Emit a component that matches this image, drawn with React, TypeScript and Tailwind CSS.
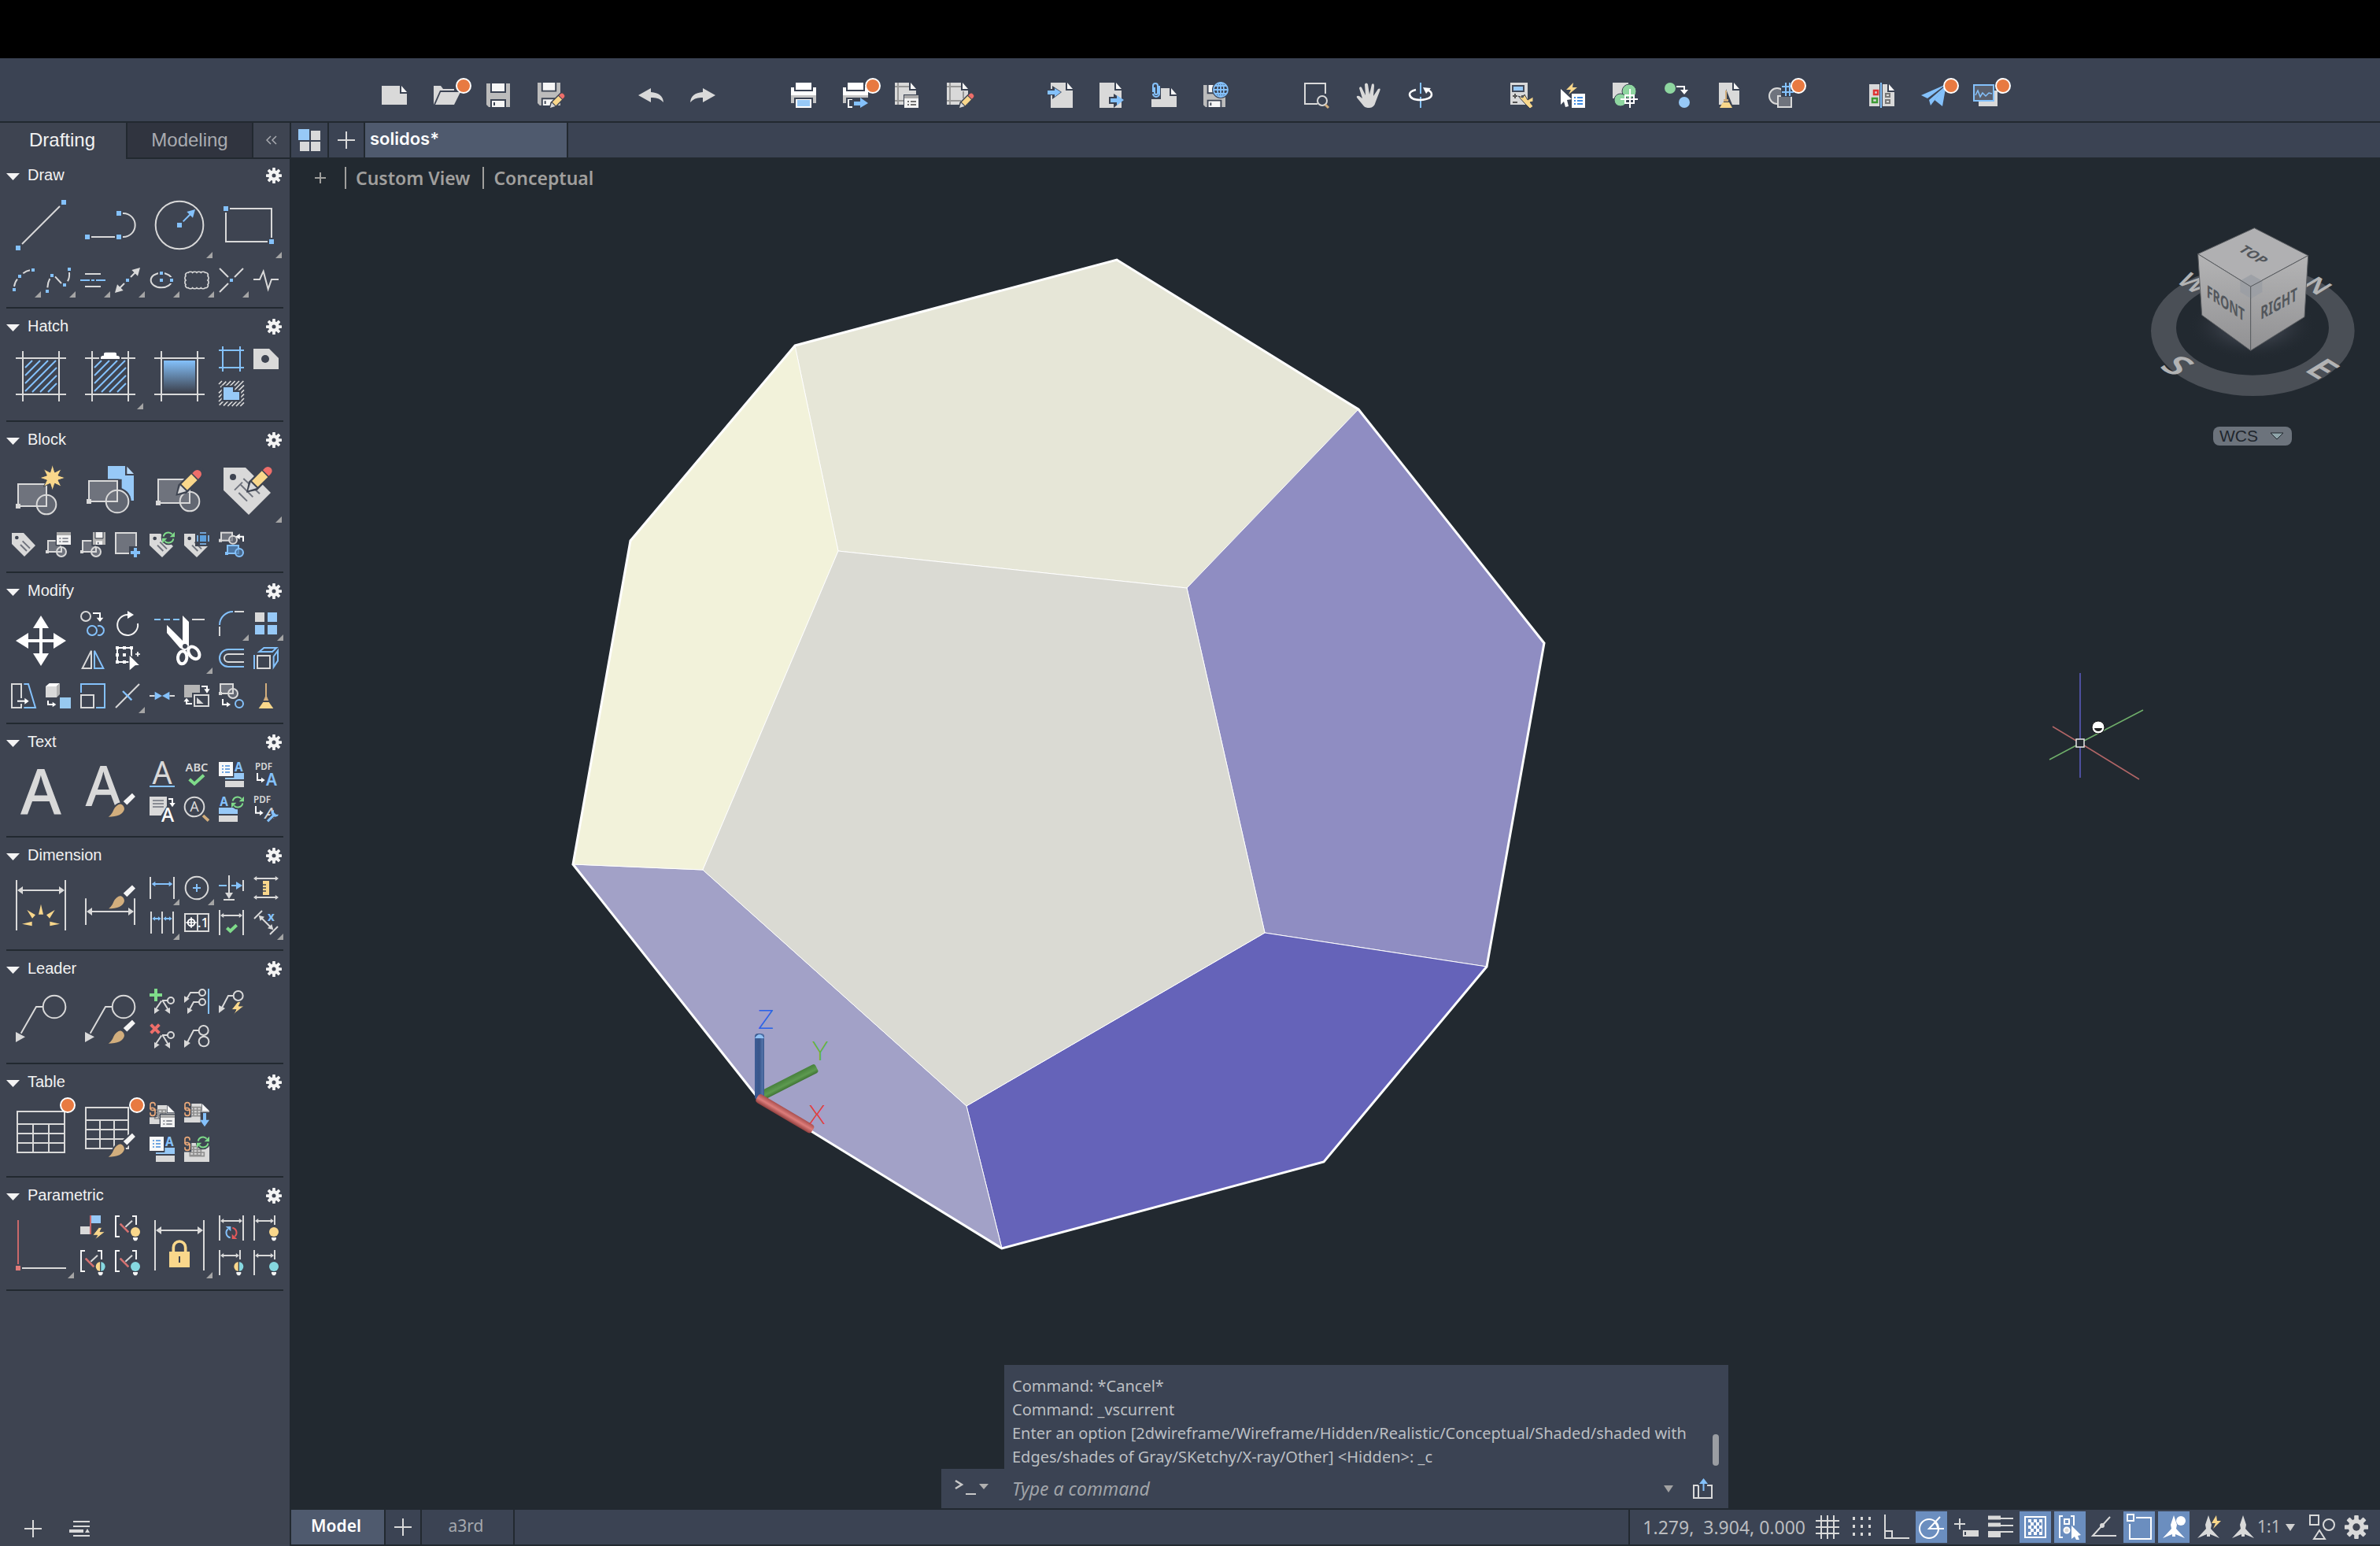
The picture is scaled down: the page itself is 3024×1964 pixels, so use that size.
import type { ReactNode } from 'react';

const W = '#d9d9d9';
const B = '#84c1fb';
const BF = '#97c9f7';
const Y = '#f9d78b';
const G = '#7fdb8a';
const R = '#ee6e6a';
const GR = '#6f737d';
const BG = '#3e4451';
const TAN = '#d2ae7d';
const SANS = 'Noto Sans, sans-serif';

/* ---------- shared drawing pieces ---------- */

function Sq({ x, y, s = 18, c = B }: { x: number; y: number; s?: number; c?: string }) {
  return <rect x={x - s / 2} y={y - s / 2} width={s} height={s} fill={c} stroke="none" />;
}

function Fill({ d, c = W }: { d: string; c?: string }) {
  return <path d={d} fill={c} stroke="none" />;
}

function Glyph({ x, y, s, c = W, w = 500, children }: { x: number; y: number; s: number; c?: string; w?: number; children: string }) {
  return (
    <text x={x} y={y} fontSize={s} fill={c} stroke="none" fontWeight={w} fontFamily={SANS} textAnchor="middle">
      {children}
    </text>
  );
}

function Span({ x1, x2, y, c = W, h = 10 }: { x1: number; x2: number; y: number; c?: string; h?: number }) {
  return (
    <>
      <path d={`M${x1 + h} ${y} H${x2 - h}`} stroke={c} />
      <Fill c={c} d={`M${x1} ${y} l${h * 1.4} ${-h} v${h * 2}z M${x2} ${y} l${-h * 1.4} ${-h} v${h * 2}z`} />
    </>
  );
}

function Pencil({ x, y, k = 1 }: { x: number; y: number; k?: number }) {
  return (
    <g transform={`translate(${x} ${y}) rotate(-45) scale(${k})`} stroke="none">
      <path d="M-10 0 L26 -23 H112 a23 23 0 0 1 0 46 H26z" fill={BG} />
      <path d="M0 0 L30 -16 V16z" fill={W} />
      <rect x="36" y="-16" width="54" height="32" fill={Y} />
      <path d="M95 -16 h11 a16 16 0 0 1 0 32 h-11z" fill={R} />
    </g>
  );
}

function Brush({ dy = 0 }: { dy?: number }) {
  return (
    <g transform={`translate(0 ${dy})`} stroke={BG} strokeWidth="6">
      <path d="M80 194 Q100 182 106 164 Q116 142 136 139 Q152 144 153 162 Q146 196 80 194z" fill={TAN} />
      <path d="M142 132 L180 97 L196 114 L160 150z" fill="#f4f4f4" />
    </g>
  );
}

function Sync({ x, y, a = G, b = G }: { x: number; y: number; a?: string; b?: string }) {
  return (
    <g transform={`translate(${x} ${y})`}>
      <circle r="28" fill={BG} stroke="none" />
      <path d="M-19 -4 A19 19 0 0 1 14 -13" stroke={a} />
      <path d="M19 4 A19 19 0 0 1 -14 13" stroke={b} />
      <Fill c={a} d="M24 -22 V-2 H5z" />
      <Fill c={b} d="M-24 22 V2 H-5z" />
    </g>
  );
}

function Bulb({ x, y, l, r = l }: { x: number; y: number; l: string; r?: string }) {
  return (
    <g transform={`translate(${x} ${y})`} stroke="none">
      <circle r="23" fill={BG} />
      <path d="M0 -18 a18 18 0 0 0 0 36z" fill={l} />
      <path d="M0 -18 a18 18 0 0 1 0 36z" fill={r} />
      {l !== r && <path d="M-2 -18 h4 v36 h-4z" fill={BG} />}
      <path d="M-9 21 h18 v6 l-5 7 h-8 l-5 -7z" fill="#f4f4f4" />
    </g>
  );
}

function Tag() {
  return (
    <>
      <Fill d="M0 6 H42 L90 54 L48 96 L0 50z" />
      <circle cx="20" cy="24" r="7" fill={BG} stroke="none" />
      <path d="M40 38 L66 64 M30 50 L52 72" stroke={GR} />
    </>
  );
}

function MiniBlock({ c = W, f = GR, x = 0, y = 0 }: { c?: string; f?: string; x?: number; y?: number }) {
  return (
    <g transform={`translate(${x} ${y})`} stroke={c}>
      <rect x="9" y="3" width="42" height="30" fill={f} />
      <circle cx="54" cy="30" r="15" fill={f} fillOpacity=".7" />
      <Sq x={6} y={33} s={12} c={c} />
    </g>
  );
}

const BOLT = 'M24 0 L0 30 H18 L8 48 L48 16 H28 L36 0z';

function Leader({ x, y, k = 1 }: { x: number; y: number; k?: number }) {
  return (
    <g transform={`translate(${x} ${y}) scale(${k})`}>
      <path d="M55 20 H36 L12 66" />
      <circle cx="74" cy="20" r="18" />
      <Fill d="M0 56 L24 68 L0 86z" />
    </g>
  );
}

function Split() {
  return (
    <>
      <path d="M69 45 H48 M46 46 L24 78 M50 46 L70 78" />
      <circle cx="81" cy="45" r="12" />
      <Fill d="M18 96 V72 L38 82z M78 96 V72 L58 82z" />
    </>
  );
}

function Frame() {
  return <path d="M27 0 V192 M165 0 V192 M0 27 H192 M0 165 H192" />;
}

const hatchLines = [99, 129, 159, 189, 219, 249, 279].map((c) => {
  const x1 = Math.max(36, c - 156);
  const x2 = Math.min(156, c - 36);
  return `M${x1} ${c - x1} L${x2} ${c - x2}`;
}).join(' ');

function Chain() {
  return (
    <g stroke="#e9a879" strokeWidth="5">
      <rect x="-2" y="-2" width="28" height="60" fill={BG} stroke="none" />
      <path d="M21 14 V10 a9 8 0 0 0 -18 0 V20 a9 8 0 0 0 18 6 M3 40 V44 a9 8 0 0 0 18 0 V34 a9 8 0 0 0 -18 -6" />
    </g>
  );
}

function Cells({ x, y }: { x: number; y: number }) {
  return <path transform={`translate(${x} ${y})`} d="M0 0 H42 V33 H0z M0 11 H42 M0 22 H42 M14 0 V33 M28 0 V33" stroke="#8f8f8f" strokeWidth="5" />;
}

function Bracket() {
  return (
    <>
      <path d="M18 3 H3 V81 H18 M66 3 H81 V36" stroke="#f4f4f4" />
      <path d="M40 44 L66 20" />
      <path d="M20 32 L52 64" stroke="#d57170" strokeWidth="8" />
    </>
  );
}

/* ---------- palette icons, 192 units for 64px ---------- */

const large: Record<string, ReactNode> = {
  line: <><path d="M24 168 L168 24" /><Sq x={9} y={183} /><Sq x={183} y={9} /></>,
  polyline: <><path d="M24 141 H114 M144 51 h2 a45 45 0 0 1 0 90 h-2" /><Sq x={9} y={141} /><Sq x={129} y={141} /><Sq x={129} y={51} /></>,
  circle: (
    <>
      <circle cx="96" cy="96" r="91" />
      <path d="M110 82 L138 54" stroke={B} />
      <Fill c={B} d="M156 36 L124 45 L147 68z" />
      <Sq x={96} y={96} />
    </>
  ),
  rectangle: <><path d="M24 33 H183 V144 M9 48 V159 H168" /><Sq x={9} y={33} /><Sq x={183} y={159} /></>,
  hatch: <><Frame /><path d={hatchLines} stroke={B} /></>,
  'hatch edit': (
    <>
      <Frame />
      <path d={hatchLines} stroke={B} />
      <Fill c={BG} d="M54 0 H138 V34 H54z" />
      <Fill c="#fff" d="M60 30 V24 Q60 18 72 17 V10 Q72 5 78 5 H114 Q120 5 120 10 V17 Q132 18 132 24 V30z" />
    </>
  ),
  gradient: (
    <>
      <defs>
        <linearGradient id="gradFill" x1="0" x2="0" y1="0" y2="1">
          <stop offset="0" stopColor={B} />
          <stop offset="1" stopColor={BG} />
        </linearGradient>
      </defs>
      <Frame />
      <rect x="36" y="36" width="120" height="120" fill="url(#gradFill)" stroke="none" />
    </>
  ),
  'create block': (
    <>
      <rect x="9" y="75" width="108" height="84" fill={GR} />
      <circle cx="117" cy="153" r="37" fill={GR} fillOpacity=".75" />
      <path d="M117 116 V159 H80" />
      <Sq x={9} y={159} c={W} />
      <path d="M140 0 L149 30 L174 17 L162 42 L190 51 L162 60 L174 85 L149 73 L140 100 L131 73 L106 85 L118 60 L90 51 L118 42 L106 17 L131 30z" fill={Y} stroke={BG} strokeWidth="3" />
    </>
  ),
  'insert block': (
    <>
      <Fill c={BF} d="M87 6 H153 V42 H186 V138 H140 V56 H87z" />
      <Fill c="#b9daf8" d="M160 8 L186 36 H160z" />
      <circle cx="123" cy="141" r="53" fill={BG} stroke="none" />
      <rect x="8" y="56" width="122" height="90" fill={BG} stroke="none" />
      <rect x="15" y="63" width="108" height="78" fill={GR} />
      <circle cx="123" cy="141" r="43" fill={GR} fillOpacity=".75" />
      <path d="M123 98 V141 H80" />
      <Sq x={15} y={141} c={W} />
    </>
  ),
  'edit block': (
    <>
      <rect x="15" y="57" width="120" height="90" fill={GR} />
      <circle cx="135" cy="141" r="37" fill={GR} fillOpacity=".75" />
      <path d="M135 104 V147 H98" />
      <Sq x={15} y={147} c={W} />
      <Pencil x={89} y={112} />
    </>
  ),
  'edit attribute': (
    <>
      <Fill d="M0 12 H84 L180 108 L96 192 L0 98z" />
      <circle cx="36" cy="48" r="12" fill={BG} stroke="none" />
      <path d="M76 54 L138 112 M42 98 L72 68 M66 78 L112 124 M58 108 L90 140" stroke={GR} />
      <Pencil x={94} y={100} />
    </>
  ),
  move: <Fill c="#fff" d="M96 0 L126 48 H102 V90 H144 V66 L192 96 L144 126 V102 H102 V144 H126 L96 192 L66 144 H90 V102 H48 V126 L0 96 L48 66 V90 H90 V48 H66z" />,
  trim: (
    <>
      <path d="M0 15 H24 M36 15 H60 M72 15 H96" stroke={B} />
      <path d="M144 15 H192" />
      <Fill c="#fff" d="M48 36 L106 94 L132 122 L118 134 L98 124 L48 66z M108 0 L132 24 V118 L108 106z" />
      <ellipse cx="107" cy="160" rx="17" ry="24" stroke="#fff" strokeWidth="12" transform="rotate(6 107 160)" />
      <ellipse cx="151" cy="142" rx="18" ry="26" stroke="#fff" strokeWidth="12" transform="rotate(-38 151 142)" />
      <circle cx="117" cy="117" r="9" fill={BG} stroke="none" />
    </>
  ),
  text: <Glyph x={96} y={180} s={238} w={500}>A</Glyph>,
  'text style': <><Glyph x={70} y={150} s={210} w={500}>A</Glyph><Brush /></>,
  dimension: (
    <>
      <path d="M3 0 V192 M189 0 V192" />
      <Span x1={6} x2={186} y={39} h={15} />
      <Fill c={Y} d="M96 92 L105 131 H87z M43 114 L75 133 L63 146z M149 114 L129 146 L117 133z M24 167 L62 158 V175z M168 167 L130 158 V175z" />
    </>
  ),
  'dimension style': (
    <>
      <path d="M3 70 V171 M189 70 V171" />
      <Span x1={6} x2={186} y={120} h={15} />
      <Brush dy={-82} />
    </>
  ),
  multileader: <><path d="M105 51 H78 L20 152" /><circle cx="147" cy="51" r="43" /><Fill d="M0 147 L36 166 L0 186z" /></>,
  'multileader style': <><path d="M105 51 H78 L20 152" /><circle cx="147" cy="51" r="43" /><Fill d="M0 147 L36 166 L0 186z" /><Brush /></>,
  table: <path d="M6 18 H186 V174 H6z M6 66 H186 M6 102 H186 M6 138 H186 M66 66 V174 M126 66 V174" />,
  'table style': <><path d="M3 3 H165 V159 H3z M3 51 H165 M3 87 H165 M3 123 H165 M57 51 V159 M111 51 V159" /><Brush /></>,
  constraint: <><path d="M9 0 V168" stroke="#c9686a" /><path d="M24 183 H192" /><Sq x={9} y={183} c="#e07b79" /></>,
  'dimensional constraint': (
    <>
      <path d="M3 0 V192 M189 0 V192" />
      <Span x1={6} x2={186} y={39} h={15} />
      <path d="M73 122 V104 a23 23 0 0 1 46 0 V122" stroke={Y} strokeWidth="11" />
      <rect x="57" y="120" width="78" height="60" fill={Y} stroke="none" />
      <path d="M96 138 V162" stroke={BG} />
    </>
  ),
};

/* ---------- palette icons, 96 units for 32px ---------- */

const small: Record<string, ReactNode> = {
  arc: <><path d="M12 72 Q15 54 24 44 M46 22 Q58 12 72 10" /><Sq x={12} y={84} s={12} /><Sq x={33} y={33} s={12} /><Sq x={84} y={9} s={12} /></>,
  spline: (
    <>
      <path d="M7 76 Q8 56 16 42 M36 34 L60 60 M84 52 Q92 38 90 18" />
      <Sq x={24} y={30} s={12} /><Sq x={6} y={90} s={12} /><Sq x={72} y={66} s={12} /><Sq x={90} y={6} s={12} />
    </>
  ),
  'multi line': <><path d="M18 24 H78 M18 72 H78" /><path d="M0 48 H36 M42 48 H54 M60 48 H96" stroke={B} /></>,
  'construction line': <><path d="M60 36 L78 18 M36 60 L18 78" /><Fill d="M96 0 L64 9 L87 32z M0 96 L32 87 L9 64z" /><Sq x={48} y={48} s={12} /></>,
  ellipse: (
    <>
      <ellipse cx="45" cy="48" rx="40" ry="28" />
      <Sq x={45} y={21} s={24} c={BG} /><Sq x={84} y={48} s={24} c={BG} />
      <Sq x={45} y={21} s={12} /><Sq x={45} y={48} s={12} /><Sq x={84} y={48} s={12} />
    </>
  ),
  'revision cloud': <path strokeWidth="5" d="M16 19 a9 6 0 0 1 16 0 a9 6 0 0 1 16 0 a9 6 0 0 1 16 0 a9 6 0 0 1 16 0 a9 9 0 0 1 10 13 a6 9 0 0 1 0 16 a6 9 0 0 1 0 16 a9 9 0 0 1 -10 13 a9 6 0 0 1 -16 0 a9 6 0 0 1 -16 0 a9 6 0 0 1 -16 0 a9 6 0 0 1 -16 0 a9 9 0 0 1 -10 -13 a6 9 0 0 1 0 -16 a6 9 0 0 1 0 -16 a9 9 0 0 1 10 -13z" />,
  point: <><path d="M3 3 L36 36 M93 3 L60 36 M3 93 L36 60" /><Sq x={48} y={48} s={12} /></>,
  breakline: <path d="M0 45 H24 L38 14 L56 82 L69 45 H96" />,
  boundary: <path d="M15 0 V96 M81 0 V96 M0 15 H96 M0 81 H96" stroke={B} />,
  region: <><Fill d="M0 9 H60 L96 45 V87 H0z" /><circle cx="45" cy="48" r="15" fill={BG} stroke="none" /></>,
  wipeout: (
    <>
      <path
        strokeWidth="5"
        d="M0 12 L12 0 M6 24 L28 2 M0 46 L46 0 M0 62 L62 0 M0 78 L78 0 M2 92 L94 0 M18 94 L96 16 M34 96 L96 34 M50 96 L96 50 M66 96 L96 66 M82 96 L96 82"
      />
      <path d="M18 24 H54 V42 H78 V72 H18z" fill={BF} stroke={BG} strokeWidth="14" />
      <Fill c={BF} d="M18 24 H54 V42 H78 V72 H18z" />
    </>
  ),
  attribute: (
    <>
      <Fill d="M3 3 H48 L93 51 L51 93 L3 45z" />
      <circle cx="22" cy="21" r="7" fill={BG} stroke="none" />
      <path d="M44 34 L72 62 M36 48 L60 72" stroke={GR} />
    </>
  ),
  'block properties': (
    <>
      <rect x="9" y="33" width="48" height="42" fill={GR} />
      <circle cx="60" cy="75" r="18" fill={GR} />
      <path d="M60 57 V75 H42" />
      <Sq x={6} y={75} s={12} c={W} />
      <Fill c={BG} d="M38 0 H96 V52 H38z" />
      <Fill c="#a9a9a9" d="M42 0 H96 V12 H42z" />
      <Fill c="#f2f2f2" d="M42 12 H96 V48 H42z" />
      <path d="M52 24 H58 M64 24 H86 M52 36 H58 M64 36 H86" stroke={GR} strokeWidth="4" />
    </>
  ),
  'write block': (
    <>
      <rect x="9" y="33" width="48" height="42" fill={GR} />
      <circle cx="60" cy="75" r="18" fill={GR} />
      <path d="M60 57 V75 H42" />
      <Sq x={6} y={75} s={12} c={W} />
      <Fill c={BG} d="M43 0 H96 V53 H43z" />
      <Fill c="#b3b3b3" d="M48 0 H96 V48 H48z" />
      <Fill c="#f2f2f2" d="M58 0 H86 V21 H58z M60 34 H84 V48 H60z" />
      <path d="M57 0 V24 H87 V0" stroke={BG} strokeWidth="3" />
      <path d="M68 38 V46" stroke={BG} strokeWidth="4" />
    </>
  ),
  'add boundary': <><rect x="3" y="3" width="78" height="78" fill={GR} /><Fill c={BG} d="M54 54 H96 V96 H54z" /><path d="M3 3 H81 V54 M3 3 V81 H54" /><path d="M78 60 V96 M60 78 H96" stroke={B} strokeWidth="12" /></>,
  'sync attribute': <><Tag /><Sync x={72} y={21} /></>,
  'attribute extract': (
    <>
      <Tag />
      <Fill c={BG} d="M42 0 H96 V54 H42z" />
      <Fill c="#5c9fdc" d="M60 12 H84 V36 H60z" />
      <path d="M60 3 H84 M60 45 H84 M51 12 V36 M93 12 V36" stroke={B} strokeWidth="5" />
    </>
  ),
  'replace block': (
    <>
      <MiniBlock x={0} y={-1} />
      <path d="M93 36 V17 H78" stroke="#fff" /><Fill c="#fff" d="M64 17 L80 6 V28z" />
      <MiniBlock x={24} y={48} c={B} f="#4d77a4" />
    </>
  ),
  copy: (
    <>
      <circle cx="21" cy="21" r="18" />
      <path d="M48 9 H75 V28" stroke="#fff" /><Fill c="#fff" d="M75 42 L62 26 H88z" />
      <circle cx="45" cy="75" r="18" stroke={B} />
      <path d="M66 58 a18 18 0 1 1 0 34" stroke={B} />
    </>
  ),
  rotate: <><path d="M48 15 a39 39 0 1 0 39 33" stroke="#f4f4f4" /><Fill c="#fff" d="M48 0 V30 L72 15z" /></>,
  mirror: <><path d="M42 20 V87 H8z" /><path d="M54 20 V87 H88z" stroke={B} /></>,
  select: (
    <>
      <rect x="9" y="9" width="54" height="54" stroke="#fff" />
      <Sq x={9} y={9} s={12} c="#fff" /><Sq x={36} y={9} s={12} c="#fff" /><Sq x={63} y={9} s={12} c="#fff" />
      <Sq x={9} y={36} s={12} c="#fff" /><Sq x={36} y={36} s={12} c="#fff" />
      <Sq x={9} y={63} s={12} c="#fff" /><Sq x={36} y={63} s={12} c="#fff" />
      <path d="M54 34 L96 76 L78 78 L54 98z" fill="#fff" stroke={BG} strokeWidth="4" />
      <path d="M78 33 H96 M87 24 V42" stroke="#fff" strokeWidth="5" />
    </>
  ),
  fillet: <><path d="M60 3 H96 M3 60 V96" /><path d="M3 54 A51 51 0 0 1 54 3" stroke={B} /></>,
  array: <><Fill d="M6 6 h36 v36 h-36z" /><Fill c={BF} d="M54 6 h36 v36 h-36z M6 54 h36 v36 h-36z M54 54 h36 v36 h-36z" /></>,
  offset: <><path d="M96 15 H36 a33 33 0 0 0 0 66 H96" stroke={B} /><path d="M96 33 H36 a15 15 0 0 0 0 30 H96" /></>,
  explode: <><path d="M3 36 V90 M22 24 L40 9 H88 L72 24z M77 42 L93 20 V58 L77 82z" stroke={B} /><rect x="15" y="39" width="48" height="48" /></>,
  stretch: <><path d="M39 57 V3 H3 V93 H39 V78" /><path d="M49 3 H66 L93 93 H49" stroke={B} /><path d="M24 68 H58" stroke="#fff" /><Fill c="#fff" d="M68 68 L52 56 V80z" /></>,
  'extract faces': (
    <>
      <Fill c="#d9d9d9" d="M0 12 H42 V54 H0z" /><Fill c="#fff" d="M0 12 L14 0 H54 L42 12z" /><Fill c="#b3b3b3" d="M42 12 L54 0 V42 L42 54z" />
      <Fill c="#97c9ef" d="M54 54 H96 V96 H54z" />
      <path d="M9 66 V81 H28" stroke="#fff" /><Fill c="#fff" d="M40 81 L26 71 V91z" />
    </>
  ),
  scale: <><path d="M3 36 V3 H93 V93 H60" stroke={B} /><rect x="3" y="45" width="48" height="48" /></>,
  break: <><path d="M3 93 L93 3" /><path d="M30 30 L64 64" stroke={B} strokeWidth="7" /></>,
  join: <><path d="M0 48 H20 M76 48 H96" /><Fill c={B} d="M20 32 V64 L48 48z M76 32 V64 L48 48z" /></>,
  'draw order': (
    <>
      <Fill c="#b5b5b5" d="M0 6 H60 V36 H30 V54 H0z" />
      <rect x="39" y="45" width="54" height="42" fill={BG} /><Fill d="M48 54 V78 H74z" />
      <path d="M66 12 H87 V24 M30 78 H9 V68" stroke="#fff" /><Fill c="#fff" d="M87 38 L76 22 H98z M9 56 L-2 70 H20z" />
    </>
  ),
  'convert block': (
    <>
      <rect x="6" y="3" width="48" height="36" fill={GR} /><circle cx="54" cy="39" r="18" fill={GR} fillOpacity=".75" /><path d="M54 21 V39 H36" />
      <Sq x={6} y={39} s={12} c={W} />
      <path d="M15 60 V81 H32" stroke="#fff" /><Fill c="#fff" d="M45 81 L30 71 V91z" />
      <circle cx="78" cy="78" r="15" stroke={B} />
    </>
  ),
  purge: <><path d="M48 0 V54" stroke={TAN} /><Fill c={TAN} d="M45 50 H51 L58 66 H38z" /><Fill c={Y} d="M37 72 H59 L76 96 H20z" /></>,
  'single text': <><Glyph x={48} y={84} s={118} w={400}>A</Glyph><path d="M0 93 H96" stroke={B} /></>,
  spell: <><Glyph x={48} y={35} s={44} w={600}>ABC</Glyph><path d="M20 66 L39 83 L75 50" stroke={G} strokeWidth="12" /></>,
  'text fields': (
    <>
      <Fill c={BF} d="M24 42 H96 V66 H24z" /><Fill d="M24 72 H96 V96 H24z" />
      <Fill c={BG} d="M0 0 H58 V60 H0z" /><Fill c="#f8f8f8" d="M0 0 H54 V54 H0z" />
      <path d="M12 15 H18 M24 15 H42 M12 27 H18 M24 27 H42 M12 39 H18 M24 39 H42" stroke="#4389d8" strokeWidth="5" />
      <Glyph x={76} y={35} s={46} c={B} w={700}>A</Glyph>
    </>
  ),
  'pdf text': (
    <>
      <Glyph x={39} y={30} s={35} w={600}>PDF</Glyph><path d="M15 42 V69 H32" stroke="#fff" /><Fill c="#fff" d="M44 69 L30 59 V79z" />
      <Glyph x={69} y={90} s={62} c={B} w={600}>A</Glyph>
    </>
  ),
  'text align': (
    <>
      <Fill d="M0 0 H66 V36 L44 72 H0z" /><path d="M12 15 H54 M12 27 H54 M12 39 H54" stroke={GR} strokeWidth="5" />
      <path d="M72 9 H87 V26" stroke="#fff" /><Fill c="#fff" d="M87 40 L76 24 H98z" />
      <Glyph x={69} y={96} s={74} c="#fff" w={500}>A</Glyph>
    </>
  ),
  'find text': <><circle cx="39" cy="39" r="37" /><Glyph x={39} y={57} s={54} w={400}>A</Glyph><path d="M72 72 L93 92" stroke={TAN} strokeWidth="11" /></>,
  'update fields': (
    <>
      <Fill c={BF} d="M0 42 H72 V66 H0z" /><Fill d="M0 72 H72 V96 H0z" />
      <Glyph x={20} y={35} s={46} c={B} w={700}>A</Glyph><Sync x={72} y={21} />
    </>
  ),
  'pdf settings': (
    <>
      <Glyph x={33} y={24} s={35} w={600}>PDF</Glyph><path d="M9 36 V62 H26" stroke="#fff" /><Fill c="#fff" d="M38 62 L24 52 V72z" />
      <g transform="skewX(-14)"><Glyph x={80} y={84} s={58} w={500}>A</Glyph></g>
      <path d="M54 94 L80 66" stroke={BG} strokeWidth="18" /><path d="M54 94 L82 66" stroke={B} strokeWidth="9" />
      <path d="M78 50 a14 14 0 1 0 18 18 l-10 0 l-8 -8z" fill={B} stroke="none" />
    </>
  ),
  linear: <><path d="M3 6 V90 M93 6 V90" /><Span x1={8} x2={88} y={33} c={B} /></>,
  'center mark': <><circle cx="48" cy="48" r="43" /><path d="M48 33 V63 M33 48 H63" stroke={B} /></>,
  ordinate: (
    <>
      <path d="M39 0 V68 M18 93 H60 M93 18 V60" /><Fill d="M39 90 L24 66 H54z" />
      <path d="M0 39 H30 M48 39 H68" stroke={B} /><Fill c={B} d="M90 39 L66 24 V54z" />
    </>
  ),
  'quick measure': (
    <>
      <Span x1={0} x2={96} y={12} h={9} /><Span x1={0} x2={96} y={84} h={9} />
      <Fill c={Y} d="M36 21 H60 V75 H36z" /><path d="M36 36 H48 M36 48 H48 M36 60 H48" stroke={BG} strokeWidth="5" />
    </>
  ),
  continue: <><path d="M6 6 V90 M48 6 V90 M90 6 V90" /><Span x1={10} x2={44} y={33} c={B} h={8} /><Span x1={52} x2={86} y={33} c={B} h={8} /></>,
  tolerance: (
    <>
      <path d="M3 15 H93 V81 H3z M51 15 V81" />
      <circle cx="27" cy="48" r="13" stroke="#fff" /><path d="M27 28 V68 M7 48 H47" stroke="#fff" strokeWidth="5" />
      <Glyph x={72} y={67} s={50} c="#fff" w={500}>.1</Glyph>
    </>
  ),
  inspect: <><path d="M3 0 V96 M93 0 V96" /><Span x1={6} x2={90} y={21} h={9} /><path d="M31 68 L44 80 L68 58" stroke={G} strokeWidth="12" /></>,
  oblique: <><path d="M3 33 L33 3 M63 93 L93 63 M30 30 L66 66" /><Fill d="M20 20 L42 26 L26 42z M76 76 L54 70 L70 54z" /><Glyph x={67} y={42} s={46} c={B} w={700}>x</Glyph></>,
  'add leader': <><path d="M24 0 V48 M0 24 H48" stroke={G} strokeWidth="12" /><Split /></>,
  'align leader': (
    <>
      <circle cx="69" cy="15" r="12" /><circle cx="69" cy="51" r="12" />
      <path d="M57 15 H24 L9 40 M57 51 H36 L20 80" />
      <Fill d="M0 28 L20 38 L0 54z M12 72 L32 82 L12 96z" />
      <path d="M93 0 V96" stroke={B} />
    </>
  ),
  'quick leader': <><Leader x={0} y={7} k={1} /><g transform="translate(48 50)"><path d={BOLT} fill={Y} stroke={BG} strokeWidth="3" /></g></>,
  'remove leader': <><path d="M5 5 L37 37 M37 5 L5 37" stroke={R} strokeWidth="12" /><Split /></>,
  'collect leader': <><Leader x={0} y={7} k={1} /><circle cx="75" cy="69" r="19" /></>,
  'data link': (
    <>
      <Fill d="M30 12 H66 V42 H96 V84 H0 V56 H30z" /><Fill c="#f8f8f8" d="M68 12 L96 40 H68z" /><Cells x={20} y={30} />
      <Chain />
      <Fill c={BG} d="M38 44 H96 V96 H38z" /><Fill c="#a9a9a9" d="M42 48 H96 V60 H42z" /><Fill c="#f2f2f2" d="M42 60 H96 V96 H42z" />
      <path d="M52 72 H58 M64 72 H86 M52 84 H58 M64 84 H86" stroke={GR} strokeWidth="4" />
    </>
  ),
  'download link': (
    <>
      <Fill d="M28 6 H66 V34 H96 V60 H66 V78 H0 V58 H28z" /><Fill c="#f8f8f8" d="M68 6 L96 34 H68z" /><Cells x={22} y={20} />
      <Chain />
      <Fill c={BG} d="M62 38 H96 V96 H62z" /><Fill c={B} d="M72 42 H84 V68 H96 L78 94 L60 68 H72z" />
    </>
  ),
  'extract data': (
    <>
      <Fill c={BF} d="M24 42 H96 V66 H24z" /><Fill d="M24 72 H96 V96 H24z" />
      <Fill c={BG} d="M0 0 H58 V60 H0z" /><Fill c="#f8f8f8" d="M0 0 H54 V54 H0z" />
      <path d="M12 15 H18 M24 15 H42 M12 27 H18 M24 27 H42 M12 39 H18 M24 39 H42" stroke="#4389d8" strokeWidth="5" />
      <Glyph x={76} y={35} s={46} c={B} w={700}>A</Glyph>
    </>
  ),
  'update link': <><Fill d="M28 24 H96 V96 H0 V58 H28z" /><Cells x={22} y={38} /><path d="M44 60 H76 V74 H20" stroke="#8f8f8f" strokeWidth="5" /><Chain /><Sync x={72} y={21} /></>,
  'auto constrain': (
    <>
      <Fill c={BF} d="M42 0 H78 V30 H42z" /><Fill d="M0 42 H36 V72 H0z" /><path d="M39 0 V72" stroke="#c9686a" />
      <g transform="translate(47 46)"><path d={BOLT} fill={Y} stroke={BG} strokeWidth="3" /></g>
    </>
  ),
  'show constraint': <><Bracket /><Bulb x={78} y={63} l={Y} /></>,
  'toggle constraint': <><Bracket /><Bulb x={77} y={63} l={Y} r="#86d8e0" /></>,
  'hide constraint': <><Bracket /><Bulb x={78} y={63} l="#86d8e0" /></>,
  'convert dimension': <><path d="M3 0 V96 M93 0 V96" /><Span x1={6} x2={90} y={21} h={9} /><g transform="rotate(90 48 66)"><Sync x={48} y={66} a="#e5595a" b={B} /></g></>,
  'show dimension': <><path d="M3 0 V96 M81 0 V36" /><Span x1={6} x2={78} y={21} h={9} /><Bulb x={78} y={63} l={Y} /></>,
  'toggle dimension': <><path d="M3 0 V96 M81 0 V36" /><Span x1={6} x2={78} y={21} h={9} /><Bulb x={76} y={63} l={Y} r="#86d8e0" /></>,
  'hide dimension': <><path d="M3 0 V96 M81 0 V36" /><Span x1={6} x2={78} y={21} h={9} /><Bulb x={78} y={63} l="#86d8e0" /></>,
};

/* a trailing "+" adds the flyout corner, "!" the orange badge, "" leaves a cell empty */
const sections = [
  { title: 'Draw', tools: ['line', 'polyline', 'circle+', 'rectangle+'], extra: ['arc+', 'spline+', 'multi line+', 'construction line+', 'ellipse+', 'revision cloud+', 'point+', 'breakline'] },
  { title: 'Hatch', tools: ['hatch', 'hatch edit+', 'gradient', 'boundary', 'region', 'wipeout'], extra: [] },
  { title: 'Block', tools: ['create block', 'insert block', 'edit block', 'edit attribute+'], extra: ['attribute', 'block properties', 'write block', 'add boundary', 'sync attribute', 'attribute extract', 'replace block'] },
  { title: 'Modify', tools: ['move', 'copy', 'rotate', 'trim+', 'fillet+', 'array+', 'mirror', 'select', 'offset', 'explode'], extra: ['stretch', 'extract faces', 'scale', 'break+', 'join', 'draw order', 'convert block', 'purge'] },
  { title: 'Text', tools: ['text', 'text style', 'single text', 'spell', 'text fields', 'pdf text', 'text align', 'find text', 'update fields', 'pdf settings'], extra: [] },
  { title: 'Dimension', tools: ['dimension', 'dimension style', 'linear+', 'center mark+', 'ordinate', 'quick measure', 'continue+', 'tolerance', 'inspect', 'oblique+'], extra: [] },
  { title: 'Leader', tools: ['multileader', 'multileader style', 'add leader', 'align leader', 'quick leader', '', 'remove leader', 'collect leader'], extra: [] },
  { title: 'Table', tools: ['table!', 'table style!', 'data link', 'download link', '', '', 'extract data', 'update link'], extra: [] },
  { title: 'Parametric', tools: ['constraint+', 'auto constrain', 'show constraint', 'dimensional constraint+', 'convert dimension', 'show dimension', 'toggle constraint', 'hide constraint', 'toggle dimension', 'hide dimension'], extra: [] },
];

function Badge({ className }: { className: string }) {
  return <span className={`absolute size-5 rounded-full border-2 border-white bg-[#e87a41] ${className}`} />;
}

function Tool({ id }: { id: string }) {
  if (!id) return <span />;
  const name = id.replace(/[+!]$/, '');
  const big = name in large;
  return (
    <button type="button" aria-label={name} className={`relative flex items-center justify-center ${big ? 'col-span-2 row-span-2' : ''}`}>
      <svg viewBox={big ? '0 0 192 192' : '0 0 96 96'} className={`overflow-visible ${big ? 'size-16' : 'size-8'}`} fill="none" stroke={W} strokeWidth="6">
        {big ? large[name] : small[name]}
      </svg>
      {id.endsWith('+') && (
        <svg viewBox="0 0 8 8" className={`absolute size-2 ${big ? 'right-0.5 bottom-0.5' : 'right-0 bottom-0'}`}>
          <path d="M8 0 V8 H0z" fill="#a5a5a5" />
        </svg>
      )}
      {id.endsWith('!') && <Badge className="top-0 right-0" />}
    </button>
  );
}

function Gear({ className, hole = 4 }: { className: string; hole?: number }) {
  return (
    <svg viewBox="0 0 32 32" className={className}>
      <g fill="currentColor">
        {[0, 45, 90, 135].map((a) => (
          <rect key={a} x="13" y="0" width="6" height="32" rx="1" transform={`rotate(${a} 16 16)`} />
        ))}
        <circle cx="16" cy="16" r="11" />
      </g>
      <circle cx="16" cy="16" r={hole} fill={BG} />
    </svg>
  );
}

function Section({ title, tools, extra }: { title: string; tools: string[]; extra: string[] }) {
  return (
    <section className="mx-2 border-b-2 border-[#222930] pb-3">
      <header className="flex h-[42px] items-center pt-1">
        <button type="button" className="flex items-center gap-2.5 pb-0.5 text-xl leading-6 text-[#f2f2f2]">
          <svg viewBox="0 0 17 9" className="mt-1 h-[9px] w-[17px]"><path d="M0 0 H17 L8.500 9z" fill="#f4f4f4" /></svg>
          {title}
        </button>
        <button type="button" aria-label={`${title} settings`} className="mr-0.5 ml-auto text-[#f4f4f4]">
          <Gear className="size-5" />
        </button>
      </header>
      <div className="grid auto-rows-[44px] grid-cols-8">
        {tools.map((id, i) => <Tool key={i} id={id} />)}
      </div>
      {extra.length > 0 && (
        <div className="mt-1 grid auto-rows-[44px] grid-cols-8">
          {extra.map((id) => <Tool key={id} id={id} />)}
        </div>
      )}
    </section>
  );
}

/* ---------- top toolbar ---------- */

const TB = '#3b4353';

function Page({ x = 0, y = 0, w = 28, h = 32, c = W }: { x?: number; y?: number; w?: number; h?: number; c?: string }) {
  return (
    <g transform={`translate(${x} ${y})`}>
      <path d={`M0 0 H${w - 9} V10 H${w} V${h} H0z`} fill={c} />
      <path d={`M${w - 7} 0 L${w} 8 H${w - 7}z`} fill="#f8f8f8" />
    </g>
  );
}

function SmallPencil() {
  return <g transform="translate(16 32) scale(.2)"><Pencil x={0} y={0} /></g>;
}

function Floppy({ s = 30, x = 2, y = 1 }: { s?: number; x?: number; y?: number }) {
  return (
    <g transform={`translate(${x} ${y}) scale(${s / 30})`}>
      <path d="M0 0 H30 V30 H3 L0 27z" fill="#bcbcbc" />
      <path d="M5 0 H25 V12 H5z M5 20 H25 V30 H5z" fill={TB} />
      <path d="M7 0 H23 V10 H7z M7 22 H23 V30 H7z" fill="#f6f6f6" />
      <path d="M9 24 H11 V28 H9z" fill={TB} />
    </g>
  );
}

function Printer({ c = BF }: { c?: string }) {
  return (
    <>
      <path d="M6 0 H26 V9 H6z" fill="#fff" />
      <path d="M0 6 H4 V11 H28 V6 H32 V16 H0z" fill="#fff" />
      <path d="M0 16 H32 V26 H28 V19 H4 V26 H0z" fill="#c4c4c4" />
      <path d="M6 21 H26 V32 H6z" fill="#fff" />
      <path d="M8 22 H24 V30 H8z" fill={c} />
    </>
  );
}

const bar: { name: string; badge?: boolean; art: ReactNode }[][] = [
  [
    { name: 'New', art: <Page y={4} w={32} h={24} /> },
    { name: 'Open', badge: true, art: <><path d="M0 28 V4 H9 L12 8 H26 V10 H8z" fill={W} /><path d="M9 12 H34 L26 28 H2z" fill={W} /></> },
    { name: 'Save', art: <Floppy x={1} /> },
    { name: 'Save as', art: <><Floppy s={29} x={0} y={0} /><SmallPencil /></> },
  ],
  [
    { name: 'Undo', art: <path d="M0 16 L16 7 V12 Q31 13 32 25 Q26 18 16 19 V25z" fill={W} /> },
    { name: 'Redo', art: <path d="M32 16 L16 7 V12 Q1 13 0 25 Q6 18 16 19 V25z" fill={W} /> },
  ],
  [
    { name: 'Print', art: <Printer /> },
    { name: 'Batch print', badge: true, art: <><Printer c={TB} /><path d="M12 19 H32 V32 H12z" fill={TB} /><path d="M14 24 H22 V19 L32 26 L22 32 V29 H14z" fill={B} /></> },
    { name: 'Page setup', art: <><Page w={27} h={28} /><path d="M0 5 H18 M0 23 H18 M4 0 V28" stroke="#979797" strokeWidth="2" /><path d="M11 15 H31 V33 H11z" fill={TB} /><path d="M12 16 H30 V20 H12z" fill="#a9a9a9" /><path d="M12 20 H30 V32 H12z" fill="#f4f4f4" /><path d="M16 24 H18 M20 24 H27 M16 28 H18 M20 28 H27" stroke="#444" strokeWidth="1.500" /></> },
    { name: 'Plot style', art: <><Page w={27} h={28} /><path d="M0 5 H18 M0 23 H18 M4 0 V28 M21 11 V20" stroke="#979797" strokeWidth="2" /><SmallPencil /></> },
  ],
  [
    { name: 'Import', art: <><Page x={4} /><path d="M0 8 H6 V4 L18 12 L6 21 V16 H0z" fill={TB} /><path d="M0 10 H9 V7 L17 12 L9 18 V15 H0z" fill={B} /></> },
    { name: 'Export', art: <><Page w={28} /><path d="M12 18 H18 V14 L30 22 L18 32 V27 H12z" fill={TB} /><path d="M14 20 H22 V16 L31 22 L22 29 V25 H14z" fill={B} /></> },
    { name: 'Attach', art: <><Page y={7} w={32} h={24} /><rect x="-1" y="0" width="13" height="21" fill={TB} /><path d="M2 12 V4 a3 3 0 0 1 6 0 V13 a2 2 0 0 1 -4 0 V6 M10 4 V14 a4 4 0 0 1 -8 0" fill="none" stroke={B} strokeWidth="2" /></> },
    { name: 'Save to web', art: <><Floppy s={28} x={0} y={3} /><circle cx="22" cy="9" r="11" fill={TB} /><g fill="none" stroke={B} strokeWidth="1.800"><circle cx="22" cy="9" r="9" /><ellipse cx="22" cy="9" rx="4" ry="9" /><path d="M22 0 V18 M13 9 H31 M15 4 H29 M15 14 H29" /></g></> },
  ],
  [
    { name: 'Zoom window', art: <><path d="M27 14 V1 H1 V27 H17" fill="none" stroke={W} strokeWidth="2" /><circle cx="23" cy="23" r="6" fill={TB} stroke={W} strokeWidth="2" /><path d="M27 28 L31 32" stroke={TAN} strokeWidth="3" /></> },
    { name: 'Pan', art: <path d="M10 30 L1 19 Q0 16 4 17 L8 20 L4 7 Q5 4 7 6 L12 16 L11 2 Q13 -1 15 2 L17 15 L20 2 Q23 0 23 4 L22 17 L28 8 Q32 6 30 11 L25 24 Q23 32 17 32 Q12 32 10 30z" fill={W} /> },
    { name: 'Orbit', art: <><path d="M16 0 V14 M16 18 V32" stroke={B} strokeWidth="2" /><path d="M10 9 Q2 11 2 15 Q3 22 16 22 Q30 21 30 15 Q30 11 24 9" fill="none" stroke="#fff" strokeWidth="2.500" /><path d="M19 6 L29 7 L23 14z" fill="#fff" /></> },
  ],
  [
    { name: 'Quick calc', art: <><path d="M2 0 H24 V28 H2z" fill={W} /><path d="M4 3 H20 V12 H4z" fill="#444c5c" /><path d="M6 5 H18 V10 H6z" fill={BF} /><path d="M5 17 H11 M8 14 V20 M5 25 H11 M16 17 H21" stroke="#555" strokeWidth="2" /><path d="M12 17 L18 19 L20 15 L24 22 L31 18 V24 L27 25 L31 30 L27 33 L20 26z" fill={Y} stroke={TB} /></> },
    { name: 'Quick select', art: <><path d="M0 8 L14 21 L8 22 L10 30 L6 31 L4 24 L0 28z" fill="#fff" /><path d="M16 0 L7 9 H13 L10 15 L21 6 H15z" fill={Y} /><path d="M14 14 H31 V32 H14z" fill="#fff" /><path d="M17 19 H19 M21 19 H28 M17 23 H19 M21 23 H28 M17 27 H19 M21 27 H28" stroke="#3f8ae0" strokeWidth="2" /></> },
    { name: 'Geolocation', art: <><path d="M0 0 H20 V20 H0z" fill={W} /><circle cx="21" cy="11" r="9" fill="#8ed6a0" stroke={TB} /><circle cx="10" cy="22" r="8" fill="#8ed6a0" stroke={TB} /><path d="M22 8 V32 M10 21 H32" stroke="#fff" strokeWidth="2" /><rect x="16" y="16" width="11" height="10" fill="none" stroke="#fff" strokeWidth="2" /></> },
    { name: 'Match layer', art: <><circle cx="7" cy="7" r="7" fill="#8ed6a0" /><circle cx="25" cy="25" r="7" fill={BF} /><path d="M15 5 H25 V10" fill="none" stroke="#fff" strokeWidth="2" /><path d="M20 9 H30 L25 15z" fill="#fff" /></> },
    { name: 'Clean', art: <><Page x={3} w={26} h={28} /><path d="M12 8 V20 L3 33 H22z" fill={TB} /><path d="M12 10 V22" stroke={TAN} strokeWidth="2" /><path d="M9 21 H15 V24 H9z" fill={TAN} /><path d="M8 25 H16 L20 32 H4z" fill={Y} /></> },
    { name: 'Count', badge: true, art: <><circle cx="11" cy="17" r="10" fill={GR} stroke={W} strokeWidth="2" /><rect x="12" y="17" width="17" height="14" fill={GR} stroke={W} strokeWidth="2" /><path d="M16 -1 H34 V18 H16z" fill={TB} /><path d="M22 0 V17 M27 0 V17 M17 5 H32 M17 12 H32" stroke={B} strokeWidth="2" /></> },
  ],
  [
    { name: 'Compare', art: <><path d="M0 2 H13 V30 H0z" fill={W} /><Page x={17} y={2} w={15} h={28} /><path d="M15 0 V32" stroke={B} strokeWidth="2" /><path d="M6 10 H11 V15 H6z" fill="none" stroke="#d33" strokeWidth="2.500" /><path d="M4 20 H10 V25 H4z" fill="none" stroke="#3d9b35" strokeWidth="2.500" /><path d="M21 14 H26 V18 H21z M21 22 H26 V26 H21z" fill="none" stroke="#777" strokeWidth="2" /></> },
    { name: 'Share', badge: true, art: <><path d="M0 16 L32 2 L8 20z" fill={B} /><path d="M10 22 L31 4 L12 29z" fill={B} /><path d="M17 22 L32 2 L27 30z" fill={B} /></> },
    { name: 'Performance', badge: true, art: <><path d="M7 10 H31 V30 H7z" fill={W} /><rect x="1" y="3" width="25" height="20" fill="#59606e" stroke={B} strokeWidth="2" /><path d="M3 16 L6 10 L9 18 L12 13 L16 17 L20 13 L24 14" fill="none" stroke={B} strokeWidth="1.500" /></> },
  ],
];

function TopBar() {
  return (
    <div className="flex h-20 items-center justify-center gap-24 bg-[#3b4353] pt-3.5">
      {bar.map((group, i) => (
        <div key={i} className="flex gap-[34px]">
          {group.map((b) => (
            <button key={b.name} type="button" aria-label={b.name} className="relative">
              <svg viewBox="0 0 32 32" className="size-8 overflow-visible">{b.art}</svg>
              {b.badge && <Badge className="-top-1.5 -right-4" />}
            </button>
          ))}
        </div>
      ))}
    </div>
  );
}

/* ---------- model space ---------- */

function Model() {
  return (
    <svg viewBox="368 199 2656 1716" className="absolute inset-0 size-full">
      <defs>
        <linearGradient id="zRod" x1="0" x2="1"><stop offset="0" stopColor="#3c5c94" /><stop offset=".5" stopColor="#38558a" /><stop offset=".8" stopColor="#5272a8" /><stop offset="1" stopColor="#3a588e" /></linearGradient>
        <linearGradient id="yRod" x1="0" x2="0" y1="0" y2="1"><stop offset="0" stopColor="#47813c" /><stop offset=".6" stopColor="#5d9a50" /><stop offset="1" stopColor="#3f7335" /></linearGradient>
        <linearGradient id="xRod" x1="0" x2="0" y1="0" y2="1"><stop offset="0" stopColor="#a94f4f" /><stop offset=".5" stopColor="#dd7d7b" /><stop offset="1" stopColor="#93403f" /></linearGradient>
      </defs>
      <g stroke="#fff" strokeWidth="1">
        <path d="M1010 438 L1419 329 L1726 519 L1508 746 L1065 699z" fill="#e6e6d7" />
        <path d="M1726 519 L1962 816 L1889 1227 L1607 1184 L1508 746z" fill="#8f8dc2" />
        <path d="M1889 1227 L1682 1475 L1273 1585 L1228 1404 L1607 1184z" fill="#6563b9" />
        <path d="M728 1097 L893 1104 L1228 1404 L1273 1585 L964 1395z" fill="#a2a1c7" />
        <path d="M1010 438 L1065 699 L893 1104 L728 1097 L801 686z" fill="#f2f2da" />
        <path d="M1065 699 L1508 746 L1607 1184 L1228 1404 L893 1104z" fill="#dadad3" />
      </g>
      <path d="M1010 438 L1419 329 L1726 519 L1962 816 L1889 1227 L1682 1475 L1273 1585 L964 1395 L728 1097 L801 686z" fill="none" stroke="#fff" strokeWidth="3" />

      <g transform="translate(970 1390) rotate(-27)"><rect x="0" y="-6" width="76" height="12" rx="3" fill="url(#yRod)" /></g>
      <rect x="959" y="1312" width="12" height="84" rx="4" fill="url(#zRod)" />
      <path d="M959 1318 Q965 1308 971 1318z" fill="#8fc0f4" />
      <g transform="translate(962 1393) rotate(30.500)"><rect x="0" y="-6" width="82" height="12" rx="4" fill="url(#xRod)" /></g>
      <g fontFamily="Lato, sans-serif" fontWeight="300" fontSize="34" textAnchor="middle">
        <text x="973" y="1306" fill="#2b62e8">Z</text>
        <text x="1042" y="1346" fill="#5ab536">Y</text>
        <text x="1038" y="1427" fill="#e04040">X</text>
      </g>

      <g fill="none" strokeWidth="1.500">
        <path d="M2643 854 V938 M2643 948 V987" stroke="#5c5cc4" />
        <path d="M2604 964 L2638 946 M2648 940 L2723 901" stroke="#6fae6a" />
        <path d="M2608 922 L2638 940 M2648 946 L2718 989" stroke="#b06566" />
        <rect x="2638" y="938" width="10" height="10" stroke="#e8e8e8" />
      </g>
      <circle cx="2666" cy="923" r="8" fill="#fff" stroke="#111" />
      <path d="M2661 924 h10 a5 4 0 0 1 -10 0z" fill="#222" />
    </svg>
  );
}

function Ground({ x, y, s, w = 600, children }: { x: number; y: number; s: number; w?: number; children: string }) {
  return (
    <text transform={`matrix(.82 .5 -.82 .5 ${x} ${y})`} y={s * 0.36} fontSize={s} fontWeight={w} textAnchor="middle">
      {children}
    </text>
  );
}

function ViewCube() {
  return (
    <div className="absolute top-[87px] right-[30px] flex flex-col items-center gap-[35px]">
      <svg viewBox="420 50 790 660" className="h-[220px] w-[264px]" fontFamily={SANS}>
        <defs>
          <linearGradient id="side" x1="0" x2="0" y1="0" y2="1"><stop offset="0" stopColor="#b4b4b5" /><stop offset="1" stopColor="#919193" /></linearGradient>
          <radialGradient id="glow"><stop offset=".5" stopColor="#333942" /><stop offset="1" stopColor="#222930" stopOpacity="0" /></radialGradient>
        </defs>
        <path fillRule="evenodd" d="M428 450 a388 248 0 0 1 776 0 a388 248 0 0 1 -776 0z M524 438 a291 181 0 0 0 582 0 a291 181 0 0 0 -582 0z" fill="#4a4f56" />
        <ellipse cx="815" cy="430" rx="245" ry="130" fill="url(#glow)" />
        <g fill="#b2b3b4">
          <Ground x={530} y={582} s={142}>S</Ground>
          <Ground x={1082} y={594} s={142}>E</Ground>
          <Ground x={590} y={268} s={104}>W</Ground>
          <Ground x={1063} y={278} s={104}>N</Ground>
        </g>
        <g stroke="#5a5d61" strokeWidth="3">
          <path d="M822 58 L1027 163 L808 281 L607 157z" fill="#b0b0b2" />
          <path d="M607 157 L808 281 V525 L622 390z" fill="url(#side)" />
          <path d="M808 281 L1027 163 L1013 397 L808 525z" fill="url(#side)" />
        </g>
        <path d="M810 235 L852 259 V302 L810 327 L768 302 V259z" fill="#9a9ea4" fillOpacity=".8" />
        <path d="M768 256 L808 281 L852 258 M808 281 V327" fill="none" stroke="#5a5d61" strokeWidth="3" />
        <g fill="#53575c" fontWeight="700">
          <Ground x={819} y={160} s={56} w={700}>TOP</Ground>
          <text transform="matrix(.66 .43 0 1 640 320)" fontSize="65">FRONT</text>
          <text transform="matrix(.66 -.36 0 1 846 408)" fontSize="68">RIGHT</text>
        </g>
      </svg>
      <button type="button" className="flex h-6 w-[100px] items-center justify-between rounded-lg bg-[#6c737c] pr-2.5 pl-2 text-[21px] text-[#20262d]">
        WCS
        <svg viewBox="0 0 18 10" className="h-2.5 w-[18px]"><path d="M1 1 H17 L9 9z" fill="#8fa5aa" stroke="#20262d" /></svg>
      </button>
    </div>
  );
}

function CommandLine() {
  return (
    <div className="absolute bottom-0 left-1/2 w-[1000px] -translate-x-1/2 font-['Noto_Sans',sans-serif] text-xl text-[#bcbfc3]">
      <div className="relative ml-20 bg-[#3b4353] pt-3 pr-10 pl-2.5 leading-[30px]">
        <p>Command: *Cancel*</p>
        <p>Command: _vscurrent</p>
        <p>Enter an option [2dwireframe/Wireframe/Hidden/Realistic/Conceptual/Shaded/shaded with</p>
        <p>Edges/shades of Gray/SKetchy/X-ray/Other] &lt;Hidden&gt;: _c</p>
        <span className="absolute right-3 bottom-1 h-10 w-2 rounded-full bg-[#9a9da2]" />
      </div>
      <div className="flex h-[50px] items-center bg-[#3b4353] pr-5">
        <button type="button" aria-label="Recent commands" className="w-20 pl-4">
          <svg viewBox="0 0 48 26" className="h-[26px] w-12">
            <path d="M2 3 L10 8 L2 13" fill="none" stroke="#c8c8c8" strokeWidth="2.500" />
            <path d="M15 20 H28" stroke="#c8c8c8" strokeWidth="2" />
            <path d="M32 7 H44 L38 14z" fill="#b0b0b0" />
          </svg>
        </button>
        <input
          type="text"
          aria-label="Command"
          placeholder="Type a command"
          className="flex-1 bg-transparent pl-2.5 text-[23px] outline-none placeholder:text-[#a0a4a9] placeholder:italic"
        />
        <button type="button" aria-label="History" className="mr-6">
          <svg viewBox="0 0 12 9" className="h-[9px] w-3"><path d="M0 0 H12 L6 9z" fill="#a2a2a2" /></svg>
        </button>
        <button type="button" aria-label="Expand">
          <svg viewBox="0 0 26 28" className="h-7 w-[26px]" fill="none">
            <path d="M8 10 H2 V26 H25 V10 H19 M8 10 V26" stroke={W} strokeWidth="2" />
            <path d="M14.500 5 V17" stroke={B} strokeWidth="2" /><path d="M14.500 1 L20 8 H9z" fill={B} />
          </svg>
        </button>
      </div>
    </div>
  );
}

/* ---------- status bar ---------- */

const MARK = 'M16 1 L20 13 L19 18 L30 30 L18 25 V28 H14 V25 L2 30 L13 18 L12 13z';

const status: { name: string; on?: boolean; art: ReactNode }[] = [
  { name: 'Grid', art: <path d="M8 1 V31 M16 1 V31 M24 1 V31 M1 8 H31 M1 16 H31 M1 24 H31" /> },
  { name: 'Snap', art: <path d="M4 5 H7 M14 5 H17 M24 5 H27 M4 15 H7 M14 15 H17 M24 15 H27 M4 25 H7 M14 25 H17 M24 25 H27" strokeWidth="4" /> },
  { name: 'Ortho', art: <path d="M1 0 V30 H32 M1 21 H10 V30" /> },
  { name: 'Polar', on: true, art: <><circle cx="13" cy="18" r="12" /><path d="M27 3 L13 18 H32 M20 10 Q24 13 24 18" /></> },
  { name: 'Dynamic input', art: <><path d="M8 5 V19 M1 12 H15" /><path d="M12 20 H32 V28 H12z" fill={W} stroke="none" /><path d="M15 22 V26" stroke={TB} /></> },
  { name: 'Lineweight', art: <><path d="M0 5 H32 M0 14 H32 M0 22 H32" /><path d="M0 4 H16 M0 13 H16" strokeWidth="5" /><path d="M0 25 H16" strokeWidth="8" /></> },
  { name: 'Transparency', on: true, art: <><rect x="3" y="3" width="26" height="26" /><path d="M7 8 H25 M7 16 H25 M7 24 H25" strokeDasharray="4 3" strokeWidth="4" /><path d="M10 12 H25 M10 20 H25" strokeDasharray="4 3" strokeWidth="4" /></> },
  { name: 'Selection cycling', on: true, art: <><path d="M7 2 H3 V29 H7 M17 2 H21 V14 M9 6 H15 V12 H9z" /><circle cx="12" cy="20" r="3.500" fill={W} /><path d="M18 14 L30 26 L26 27 L28 32 L24 32 L22 28 L18 31z" fill="#fff" stroke="none" /></> },
  { name: 'Snap tracking', art: <><path d="M31 27 H1 L23 3" /><circle cx="13" cy="14" r="3" fill={W} stroke="none" /></> },
  { name: 'Object snap', on: true, art: <><rect x="1" y="0" width="8" height="8" /><path d="M12 4 H31 V31 H4 V12" /></> },
  { name: 'Annotation visibility', on: true, art: <><path d={MARK} fill="#fff" stroke="none" /><circle cx="25" cy="8" r="6" fill="#fff" stroke="none" /></> },
  { name: 'Auto scale', art: <><path d={MARK} fill={W} stroke="none" /><path d="M26 1 L20 11 H25 L22 18 L32 8 H27z" fill={Y} stroke="none" /></> },
];

function StatusBar() {
  return (
    <footer className="mt-0.5 mb-0.5 flex h-11 gap-0.5 bg-[#222930] pl-0.5 font-['Noto_Sans',sans-serif] text-[21px] text-[#babcbf]">
      <button type="button" className="w-[118px] bg-[#4f5a6e] pr-1 pb-0.5 font-semibold text-white">Model</button>
      <button type="button" aria-label="New layout" className="flex w-11 items-center justify-center bg-[#3b4353]">
        <svg viewBox="0 0 22 22" className="size-[22px]"><path d="M11 0 V22 M0 11 H22" stroke={W} strokeWidth="2" /></svg>
      </button>
      <button type="button" className="w-[116px] bg-[#3b4353] pr-1 pb-0.5 text-[#a4a8ae]">a3rd</button>
      <div className="flex-1 bg-[#3b4353]" />
      <div className="flex items-center gap-1 bg-[#3b4353] pr-2.5 pl-4">
        <span className="mr-1 text-[23px] whitespace-pre">1.279,  3.904, 0.000</span>
        {status.map((s) => (
          <button key={s.name} type="button" aria-label={s.name} aria-pressed={!!s.on} className={`flex size-10 items-center justify-center ${s.on ? 'bg-[#6b8ebf]' : ''}`}>
            <svg viewBox="0 0 32 32" className="size-8 overflow-visible" fill="none" stroke={s.on ? '#fff' : W} strokeWidth="2">{s.art}</svg>
          </button>
        ))}
        <button type="button" className="flex w-24 items-center pl-1">
          <svg viewBox="0 0 32 32" className="size-8"><path d={MARK} fill={W} /></svg>
          <span className="ml-0.5">1:1</span>
          <svg viewBox="0 0 12 9" className="ml-1.5 h-[9px] w-3"><path d="M0 0 H12 L6 9z" fill="#d0d0d0" /></svg>
        </button>
        <button type="button" aria-label="Isolate objects" className="flex size-10 items-center justify-center">
          <svg viewBox="0 0 32 32" className="size-8 overflow-visible" fill="none" stroke={W} strokeWidth="2">
            <rect x="1" y="1" width="11" height="12" /><circle cx="25" cy="13" r="7" /><path d="M13 20 L20 31 H6z" />
          </svg>
        </button>
        <button type="button" aria-label="Customize" className="flex size-10 items-center justify-center text-[#d9d9d9]">
          <Gear className="size-[30px]" hole={5} />
        </button>
      </div>
    </footer>
  );
}

function Sidebar() {
  return (
    <aside className="flex w-[368px] shrink-0 flex-col bg-[#3e4451]">
      <div className="flex h-11 text-2xl">
        <button type="button" className="w-40 pr-0.5 text-[#f2f2f2]">Drafting</button>
        <div className="flex flex-1 gap-0.5 bg-[#222930] pl-0.5 shadow-[0_2px_0_#222930]">
          <button type="button" className="w-[158px] bg-[#30343f] text-[#a9abb0]">Modeling</button>
          <button type="button" aria-label="Collapse palette" className="flex flex-1 items-center justify-center bg-[#3e4451]">
            <svg viewBox="0 0 14 12" className="h-3 w-3.5" fill="none" stroke="#a9abb0" strokeWidth="1.500"><path d="M6 1 L1 6 L6 11 M13 1 L8 6 L13 11" /></svg>
          </button>
        </div>
      </div>
      {sections.map((s) => <Section key={s.title} {...s} />)}
      <div className="mt-auto flex items-center gap-[34px] pb-[10px] pl-[30px]">
        <button type="button" aria-label="Add palette">
          <svg viewBox="0 0 24 24" className="size-6"><path d="M12 1 V23 M1 12 H23" stroke={W} strokeWidth="2" /></svg>
        </button>
        <button type="button" aria-label="Palette list">
          <svg viewBox="0 0 26 22" className="h-[22px] w-[26px]">
            <path d="M5 2 H26 M5 8 H26 M5 20 H26" stroke={W} strokeWidth="2" /><path d="M0 14 H18" stroke={W} strokeWidth="4" /><path d="M20 16 L23 11 L26 16z" fill={W} />
          </svg>
        </button>
      </div>
    </aside>
  );
}

export default function App() {
  return (
    <div className="flex min-h-screen flex-col bg-[#222930] font-['Liberation_Sans',Arial,sans-serif]">
      <div className="h-[74px] bg-black" />
      <TopBar />
      <div className="mt-0.5 flex flex-1">
        <Sidebar />
        <main className="flex min-w-0 flex-1 flex-col">
          <nav className="flex h-11 gap-0.5 pl-0.5">
            <button type="button" aria-label="Start" className="flex w-[46px] items-center justify-center bg-[#3b4353]">
              <svg viewBox="0 0 28 28" className="size-7"><path d="M0 0 H14 V14 H0z" fill={BF} /><path d="M16 2 H28 V14 H16z M2 16 H14 V28 H2z M16 16 H28 V28 H16z" fill={W} /></svg>
            </button>
            <button type="button" aria-label="New tab" className="flex w-11 items-center justify-center bg-[#3b4353]">
              <svg viewBox="0 0 22 22" className="size-[22px]"><path d="M11 0 V22 M0 11 H22" stroke={W} strokeWidth="2" /></svg>
            </button>
            <button type="button" className="w-64 bg-[#4f5a6e] pb-1 pl-1.5 text-left font-['Inter',sans-serif] text-[22px] font-semibold text-white">solidos*</button>
            <div className="flex-1 bg-[#3b4353]" />
          </nav>
          <div className="relative flex-1">
            <Model />
            <div className="relative flex w-max items-center pt-2 pl-8 font-['Noto_Sans',sans-serif] text-[23px] leading-[36px] font-semibold text-[#a09f9d]">
              <button type="button" aria-label="Viewport controls">
                <svg viewBox="0 0 14 14" className="size-3.5"><path d="M7 0 V14 M0 7 H14" stroke="#a09f9d" strokeWidth="2" /></svg>
              </button>
              <span className="ml-6 h-7 w-0.5 bg-[#a09f9d]" />
              <button type="button" className="ml-3">Custom View</button>
              <span className="ml-4 h-7 w-0.5 bg-[#a09f9d]" />
              <button type="button" className="ml-3">Conceptual</button>
            </div>
            <ViewCube />
            <CommandLine />
          </div>
          <StatusBar />
        </main>
      </div>
    </div>
  );
}
